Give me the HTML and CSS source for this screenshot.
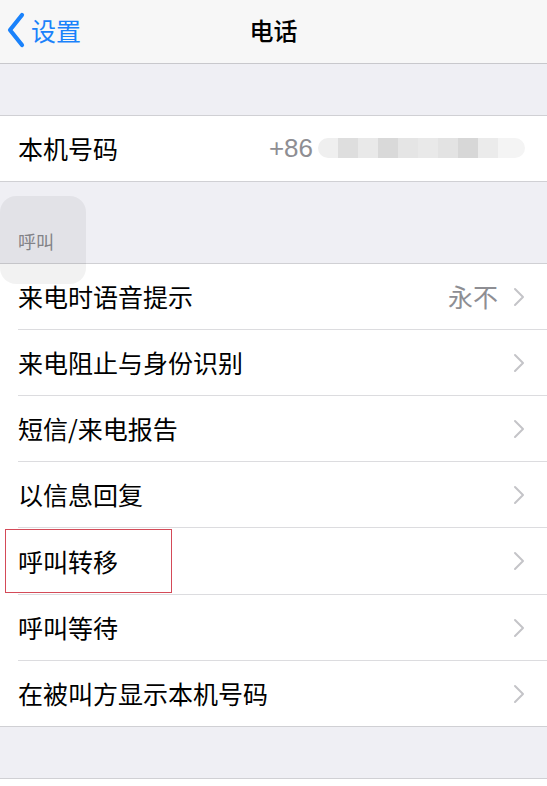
FILE: index.html
```html
<!DOCTYPE html>
<html lang="zh-CN">
<head>
<meta charset="utf-8">
<link rel="stylesheet" href="styles.css">
</head>
<body>
<div class="page">
  <header class="nav">
    <div class="back">
      <svg class="back-icon" width="22" height="36" viewBox="0 0 22 36"><path d="M17 3 L5 18 L17 33" fill="none" stroke="#1a82fb" stroke-width="4.2" stroke-linecap="round" stroke-linejoin="round"/></svg>
      <span class="back-text">设置</span>
    </div>
    <div class="title">电话</div>
  </header>
  <div class="gap gap-top"></div>
  <div class="group">
    <div class="row row-last">
      <span class="label">本机号码</span>
      <span class="number">+86</span>
      <span class="blur">
        <i class="b1"></i><i class="b2"></i><i class="b3"></i><i class="b4"></i><i class="b5"></i><i class="b6"></i><i class="b7"></i><i class="b8"></i><i class="b9"></i><i class="b10"></i>
      </span>
    </div>
  </div>
  <div class="section-head"><span>呼叫</span></div>
  <div class="group">
    <div class="row"><span class="label">来电时语音提示</span><span class="value">永不</span><svg class="chev" width="12" height="20" viewBox="0 0 12 20"><path d="M2 2 L10 10 L2 18" fill="none" stroke="#c4c4c8" stroke-width="2" stroke-linecap="round" stroke-linejoin="round"/></svg></div>
    <div class="row"><span class="label">来电阻止与身份识别</span><svg class="chev" width="12" height="20" viewBox="0 0 12 20"><path d="M2 2 L10 10 L2 18" fill="none" stroke="#c4c4c8" stroke-width="2" stroke-linecap="round" stroke-linejoin="round"/></svg></div>
    <div class="row"><span class="label">短信/来电报告</span><svg class="chev" width="12" height="20" viewBox="0 0 12 20"><path d="M2 2 L10 10 L2 18" fill="none" stroke="#c4c4c8" stroke-width="2" stroke-linecap="round" stroke-linejoin="round"/></svg></div>
    <div class="row"><span class="label">以信息回复</span><svg class="chev" width="12" height="20" viewBox="0 0 12 20"><path d="M2 2 L10 10 L2 18" fill="none" stroke="#c4c4c8" stroke-width="2" stroke-linecap="round" stroke-linejoin="round"/></svg></div>
    <div class="row row-tall"><span class="label">呼叫转移</span><span class="mark"></span><svg class="chev" width="12" height="20" viewBox="0 0 12 20"><path d="M2 2 L10 10 L2 18" fill="none" stroke="#c4c4c8" stroke-width="2" stroke-linecap="round" stroke-linejoin="round"/></svg></div>
    <div class="row"><span class="label">呼叫等待</span><svg class="chev" width="12" height="20" viewBox="0 0 12 20"><path d="M2 2 L10 10 L2 18" fill="none" stroke="#c4c4c8" stroke-width="2" stroke-linecap="round" stroke-linejoin="round"/></svg></div>
    <div class="row row-last"><span class="label">在被叫方显示本机号码</span><svg class="chev" width="12" height="20" viewBox="0 0 12 20"><path d="M2 2 L10 10 L2 18" fill="none" stroke="#c4c4c8" stroke-width="2" stroke-linecap="round" stroke-linejoin="round"/></svg></div>
  </div>
  <div class="gap gap-bottom"></div>
  <div class="group tail"></div>
  <div class="assist"></div>
</div>
</body>
</html>
```
FILE: styles.css
```css
html, body {
  margin: 0;
  padding: 0;
}
body {
  background: #efeff4;
  font-family: "Noto Sans CJK SC", "Noto Sans", sans-serif;
  color: #000;
}
.page {
  position: relative;
  width: 547px;
  height: 786px;
  overflow: hidden;
}
.nav {
  position: relative;
  height: 63px;
  background: #f7f7f7;
  border-bottom: 1px solid #c8c8cc;
  display: flex;
  align-items: center;
  justify-content: center;
  box-sizing: content-box;
}
.back {
  position: absolute;
  left: 5px;
  top: 0;
  height: 60px;
  display: flex;
  align-items: center;
  gap: 4px;
}
.back-icon {
  display: block;
}
.back-text {
  color: #1a82fb;
  font-size: 25px;
  line-height: 30px;
}
.title {
  font-size: 24px;
  font-weight: 500;
  line-height: 30px;
  margin-top: -4px;
}
.gap-top {
  height: 51px;
  border-bottom: 1px solid #d0d0d4;
}
.group {
  background: #fff;
}
.row {
  position: relative;
  height: 65px;
  display: flex;
  align-items: center;
  padding: 0 22px 0 18px;
}
.row-tall {
  height: 66px;
}
.row::after {
  content: "";
  position: absolute;
  left: 18px;
  right: 0;
  bottom: -1px;
  height: 1px;
  background: #dcdcdf;
}
.row + .row {
  margin-top: 1px;
}
.row-last::after {
  left: 0;
  background: #d0d0d4;
}
.label {
  font-size: 25px;
  line-height: 30px;
  flex: 1;
  margin-top: -1px;
}
.value {
  font-size: 25px;
  line-height: 30px;
  color: #8e8e93;
  margin-right: 15px;
  margin-top: -1px;
}
.chev {
  display: block;
}
.number {
  font-family: "Liberation Sans", Arial, sans-serif;
  font-size: 26px;
  line-height: 30px;
  color: #8e8e93;
  margin-right: 5px;
  margin-top: -2px;
}
.blur {
  display: flex;
  height: 20px;
  border-radius: 10px;
  overflow: hidden;
  margin-right: 0;
  margin-top: -1px;
}
.blur i {
  display: block;
  width: 20px;
  height: 20px;
  background: #ececec;
}
.blur .b1 { background: #efefef; }
.blur .b2 { background: #dedede; }
.blur .b3 { background: #e9e9e9; }
.blur .b4 { background: #d9d9d9; }
.blur .b5 { background: #e5e5e5; }
.blur .b6 { background: #e9e9e9; }
.blur .b7 { background: #e3e3e3; }
.blur .b8 { background: #d7d7d7; }
.blur .b9 { background: #ebebeb; }
.blur .b10 { background: #f4f4f4; width: 27px; }
.section-head {
  height: 83px;
  display: flex;
  align-items: flex-end;
  padding: 0 0 10px 18px;
  box-sizing: border-box;
  border-bottom: 1px solid #d0d0d4;
}
.section-head span {
  font-size: 18px;
  line-height: 24px;
  color: #8a8a8f;
}
.mark {
  position: absolute;
  left: 5px;
  top: 1px;
  width: 165px;
  height: 62px;
  border: 1px solid #d44a58;
}
.gap-bottom {
  height: 52px;
  border-bottom: 1px solid #d0d0d4;
}
.tail {
  height: 10px;
}
.assist {
  position: absolute;
  left: 0;
  top: 196px;
  width: 86px;
  height: 88px;
  border-radius: 16px;
  background: rgba(0, 0, 0, 0.05);
}
```
